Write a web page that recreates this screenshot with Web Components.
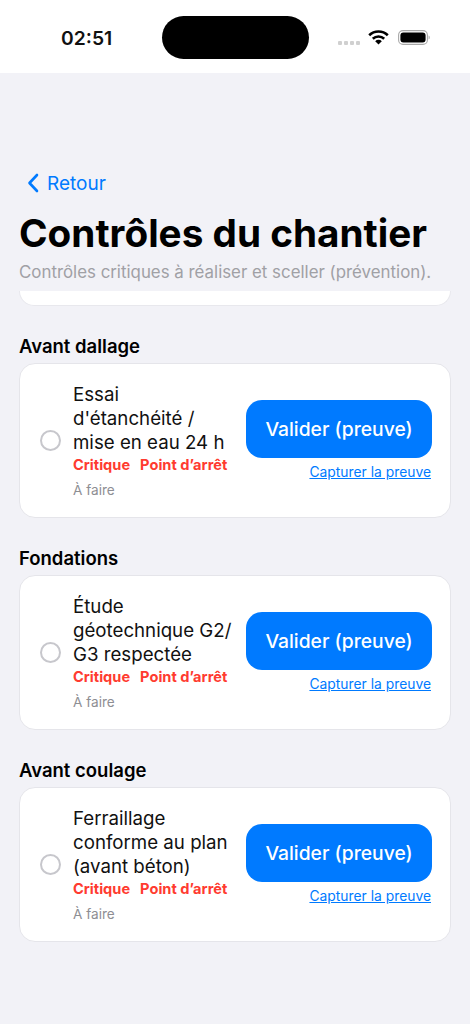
<!doctype html>
<html lang="fr">
<head>
<meta charset="utf-8">
<style>
  html, body { margin: 0; height: 100%; }
  body {
    width: 470px;
    height: 1024px;
    overflow: hidden;
    background: #f2f2f7;
    font-family: Inter, "Liberation Sans", sans-serif;
    display: flex;
    flex-direction: column;
  }
</style>
</head>
<body>
<status-bar></status-bar>
<page-header></page-header>
<check-section title="Avant dallage">
  <check-row label="Essai d'étanchéité / mise en eau 24 h"></check-row>
</check-section>
<check-section title="Fondations">
  <check-row label="Étude géotechnique G2/ G3 respectée"></check-row>
</check-section>
<check-section title="Avant coulage">
  <check-row label="Ferraillage conforme au plan (avant béton)"></check-row>
</check-section>

<script>
class StatusBar extends HTMLElement {
  constructor() {
    super()
    this.attachShadow({ mode: "open" }).innerHTML = /*html*/ `
<style>
  :host { display: block; height: 73px; background: #fff; flex: none; }
  .bar { display: flex; align-items: center; height: 75px; padding-left: 61px; }
  .time { width: 101px; font-size: 19.3px; font-weight: 600; color: #111; margin-top: 1px; }
  .island { width: 147px; height: 43px; border-radius: 22px; background: #000; }
  .dots { display: flex; gap: 2px; margin-left: 29px; margin-top: 10px; }
  .dots i { width: 4px; height: 4px; background: #d0d0d0; border-radius: 1px; }
  .wifi { margin-left: 8px; }
  .batt { margin-left: 9px; }
</style>
<div class="bar">
  <span class="time">02:51</span>
  <div class="island"></div>
  <div class="dots"><i></i><i></i><i></i><i></i></div>
  <svg class="wifi" width="21" height="15" viewBox="0 0 21 15">
    <path d="M1.2 5.2a13.4 13.4 0 0 1 18.6 0" fill="none" stroke="#000" stroke-width="2.6"/>
    <path d="M4.8 8.8a8.3 8.3 0 0 1 11.4 0" fill="none" stroke="#000" stroke-width="2.6"/>
    <path d="M10.5 14.6l-3.3-3.4a4.7 4.7 0 0 1 6.6 0z" fill="#000"/>
  </svg>
  <svg class="batt" width="32" height="15" viewBox="0 0 32 15">
    <rect x=".6" y=".6" width="28.8" height="13.8" rx="4.4" fill="none" stroke="#a8a8a8" stroke-width="1.1"/>
    <rect x="2.4" y="2.4" width="25.2" height="10.2" rx="3" fill="#000"/>
    <path d="M30.6 5.6c.8.3 1.1 1 1.1 1.9s-.3 1.6-1.1 1.9z" fill="#a8a8a8"/>
  </svg>
</div>`
  }
}
customElements.define("status-bar", StatusBar)

class PageHeader extends HTMLElement {
  constructor() {
    super()
    this.attachShadow({ mode: "open" }).innerHTML = /*html*/ `
<style>
  :host { display: block; padding: 97px 19px 0; flex: none; }
  .back { display: flex; align-items: center; gap: 8px; padding-left: 8px; height: 26px; color: #007aff; font-size: 19px; }
  h1 { margin: 15px 0 0; font-size: 38.7px; line-height: 44px; font-weight: 700; color: #000; white-space: nowrap; }
  p { margin: 5px 0 0; font-size: 16.87px; line-height: 24px; color: #a0a0a5; white-space: nowrap; }
  .peek { height: 14px; margin-top: 7px; background: #fff; border: 1px solid #e8e8ed; border-top: 0; border-radius: 0 0 16px 16px; }
</style>
<div class="back">
  <svg width="12" height="20" viewBox="0 0 12 20"><path d="M10 2 2.5 10 10 18" fill="none" stroke="#007aff" stroke-width="2.6" stroke-linecap="round" stroke-linejoin="round"/></svg>
  <span>Retour</span>
</div>
<h1>Contrôles du chantier</h1>
<p>Contrôles critiques à réaliser et sceller (prévention).</p>
<div class="peek"></div>`
  }
}
customElements.define("page-header", PageHeader)

class CheckSection extends HTMLElement {
  constructor() {
    super()
    this.attachShadow({ mode: "open" }).innerHTML = /*html*/ `
<style>
  :host { display: block; padding: 28px 19px 0; flex: none; }
  h2 { margin: 0 0 4px; font-size: 18.5px; line-height: 25px; font-weight: 600; color: #000; }
  .card { background: #fff; border: 1px solid #e5e5ea; border-radius: 16px; }
</style>
<h2></h2>
<div class="card"><slot></slot></div>`
    this.shadowRoot.querySelector("h2").textContent = this.getAttribute("title")
  }
}
customElements.define("check-section", CheckSection)

class CheckRow extends HTMLElement {
  constructor() {
    super()
    this.attachShadow({ mode: "open" }).innerHTML = /*html*/ `
<style>
  :host { display: flex; align-items: center; height: 153px; box-sizing: border-box; padding: 0 18px 0 20px; }
  .radio { width: 17px; height: 17px; flex: none; border: 2px solid #c7c7cc; border-radius: 50%; margin-right: 12px; }
  .main { width: 159px; flex: none; }
  .label { font-size: 18.7px; line-height: 24px; color: #111; }
  .tags { display: flex; gap: 10px; margin-top: 1px; font-size: 14.6px; line-height: 18px; font-weight: 700; color: #ff3b30; white-space: nowrap; }
  .state { margin-top: 7px; font-size: 13.6px; line-height: 18px; color: #8e8e93; }
  .side { display: flex; flex-direction: column; align-items: flex-end; margin-left: auto; }
  .btn { width: 186px; height: 58px; display: flex; align-items: center; justify-content: center; border-radius: 16px; background: #007aff; color: #fff; font-size: 19.3px; font-weight: 500; }
  a { margin-top: 5px; margin-right: 1px; font-size: 13.85px; line-height: 18px; color: #007aff; text-decoration: underline; }
</style>
<div class="radio"></div>
<div class="main">
  <div class="label"></div>
  <div class="tags"><span>Critique</span><span>Point d’arrêt</span></div>
  <div class="state">À faire</div>
</div>
<div class="side">
  <div class="btn">Valider (preuve)</div>
  <a>Capturer la preuve</a>
</div>`
    this.shadowRoot.querySelector(".label").textContent = this.getAttribute("label")
  }
}
customElements.define("check-row", CheckRow)
</script>
</body>
</html>
